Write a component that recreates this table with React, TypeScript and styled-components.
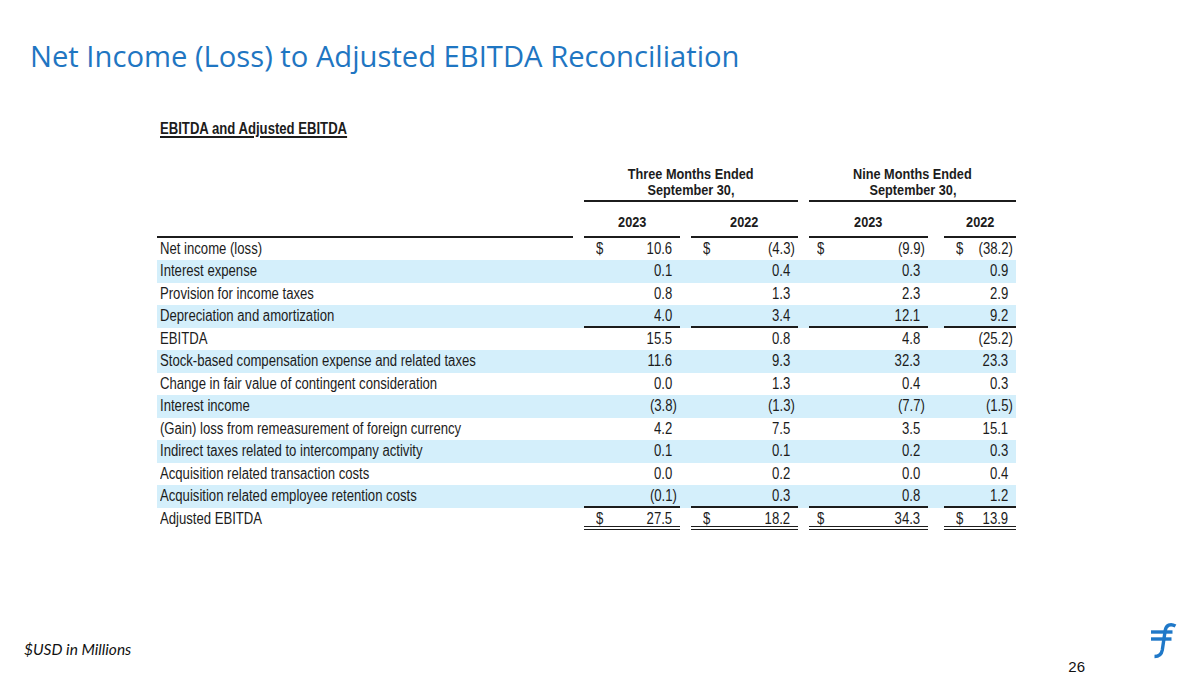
import React from 'react';
import styled, { createGlobalStyle, css } from 'styled-components';

const GlobalStyle = createGlobalStyle`
    html, body {
        margin: 0;
        padding: 0;
        background: #ffffff;
    }
`;

// Arial Narrow is Arial squeezed horizontally; no narrow face is installed, so the table text
// uses Liberation Sans (Arial metrics) and a horizontal squeeze on each text run
const TABLE_FONT = `'Liberation Sans', Arial, sans-serif`;
const SQUEEZE = 0.82;
const BLUE = '#1f76c2';
const BAND = '#d4effb';
const INK = '#1c1c1c';

// label | gap | 3M 2023 | gap | 3M 2022 | gap | 9M 2023 | gap | 9M 2022
const COLUMNS = '416px 11px 96px 11px 107px 11px 119px 16px 72px';

const Slide = styled.div`
    width: 1200px;
    height: 675px;
    display: flex;
    flex-direction: column;
    background: #ffffff;
    overflow: hidden;
`;

const Title = styled.h1`
    margin: 38px 0 0 30px;
    font-family: 'Open Sans', 'Lato', sans-serif;
    font-weight: 400;
    font-size: 29.2px;
    line-height: 36px;
    color: ${BLUE};
    white-space: nowrap;
    font-variant-ligatures: none;
`;

const TableArea = styled.div`
    margin: 44.5px 0 0 157px;
    width: 859px;
    font-family: ${TABLE_FONT};
    color: ${INK};
`;

const Squeeze = styled.span<{ origin?: 'left' | 'right' | 'center' }>`
    display: inline-block;
    white-space: nowrap;
    transform: scaleX(${SQUEEZE});
    transform-origin: ${p => p.origin ?? 'left'};
`;

const TableTitle = styled.div`
    padding-left: 3px;
    font-weight: 700;
    font-size: 16px;
    line-height: 20px;
`;

const Underlined = styled(Squeeze)`
    text-decoration: underline;
    text-decoration-thickness: 1.5px;
    text-underline-offset: 2px;
`;

const Grid = styled.div<{ top?: number }>`
    display: grid;
    grid-template-columns: ${COLUMNS};
    margin-top: ${p => p.top ?? 0}px;
`;

const PeriodHead = styled.div<{ col: string }>`
    grid-column: ${p => p.col};
    padding-bottom: 1.5px;
    border-bottom: 2px solid ${INK};
    font-weight: 700;
    font-size: 15.5px;
    line-height: 16.5px;
    text-align: center;
`;

const YearHead = styled.div<{ col: number }>`
    grid-column: ${p => p.col};
    padding-bottom: 5.5px;
    border-bottom: 2px solid ${INK};
    font-weight: 700;
    font-size: 15.5px;
    line-height: 16px;
    text-align: center;
`;

const RuleCell = styled.div`
    grid-column: 1;
    border-bottom: 2px solid ${INK};
`;

const Row = styled.div<{ band?: boolean }>`
    display: grid;
    grid-template-columns: ${COLUMNS};
    height: 22.5px;
    background: ${p => (p.band ? BAND : 'transparent')};
    font-size: 16px;
    line-height: 22.5px;
`;

const Label = styled.div`
    grid-column: 1;
    padding-left: 3px;
`;

const NumCell = styled.div<{ col: number; rule?: 'single' | 'double'; dollarPad: number }>`
    grid-column: ${p => p.col};
    box-sizing: border-box;
    height: 22.5px;
    display: flex;
    justify-content: space-between;
    padding: 0 8px 0 ${p => p.dollarPad}px;
    ${p =>
        p.rule === 'single' &&
        css`
            border-bottom: 2px solid ${INK};
        `}
    ${p =>
        p.rule === 'double' &&
        css`
            border-bottom: 4px double ${INK};
        `}
`;

const Amount = styled(Squeeze)<{ neg: boolean }>`
    /* closing parenthesis hangs past the column of figures */
    margin-right: ${p => (p.neg ? -5 : 0)}px;
`;

const Footer = styled.div`
    margin-top: auto;
    display: flex;
    justify-content: space-between;
    height: 60px;
`;

const Note = styled.div`
    margin: 24px 0 0 24px;
    font-family: 'Lato', 'Open Sans', sans-serif;
    font-style: italic;
    font-size: 15.5px;
    line-height: 20px;
    color: #111;
    height: 20px;
`;

const Corner = styled.div`
    display: flex;
    align-items: flex-end;
`;

const PageNo = styled.div`
    margin: 0 63px 0 0;
    font-family: 'Liberation Sans', Arial, sans-serif;
    font-size: 15px;
    line-height: 16px;
    color: #111;
`;

const Logo = styled.svg`
    align-self: flex-start;
    margin: 6px 22px 0 0;
`;

type Rule = 'single' | 'double' | undefined;

interface Line {
    label: string;
    values: string[];
    dollar?: boolean;
    rule?: Rule;
}

const lines: Line[] = [
    { label: 'Net income (loss)', values: ['10.6', '(4.3)', '(9.9)', '(38.2)'], dollar: true },
    { label: 'Interest expense', values: ['0.1', '0.4', '0.3', '0.9'] },
    { label: 'Provision for income taxes', values: ['0.8', '1.3', '2.3', '2.9'] },
    { label: 'Depreciation and amortization', values: ['4.0', '3.4', '12.1', '9.2'], rule: 'single' },
    { label: 'EBITDA', values: ['15.5', '0.8', '4.8', '(25.2)'] },
    { label: 'Stock-based compensation expense and related taxes', values: ['11.6', '9.3', '32.3', '23.3'] },
    { label: 'Change in fair value of contingent consideration', values: ['0.0', '1.3', '0.4', '0.3'] },
    { label: 'Interest income', values: ['(3.8)', '(1.3)', '(7.7)', '(1.5)'] },
    { label: '(Gain) loss from remeasurement of foreign currency', values: ['4.2', '7.5', '3.5', '15.1'] },
    { label: 'Indirect taxes related to intercompany activity', values: ['0.1', '0.1', '0.2', '0.3'] },
    { label: 'Acquisition related transaction costs', values: ['0.0', '0.2', '0.0', '0.4'] },
    { label: 'Acquisition related employee retention costs', values: ['(0.1)', '0.3', '0.8', '1.2'], rule: 'single' },
    { label: 'Adjusted EBITDA', values: ['27.5', '18.2', '34.3', '13.9'], dollar: true, rule: 'double' },
];

const valueCols = [3, 5, 7, 9];
const dollarPads = [12, 12, 8, 12];

const FlywireMark = () => (
    <Logo width="30" height="38" viewBox="0 0 30 38">
        <g fill="none" stroke="#1f78c8" strokeWidth="3.4" strokeLinecap="butt">
            <path d="M27.5 5 C22.5 2.2, 18 4, 17.2 9.5 L14.3 29 C13.6 33, 10.8 35.5, 6.5 35.5" />
            <path d="M3 11 H24.5" />
            <path d="M3 18 H23.5" />
        </g>
    </Logo>
);

const App = () => {
    return (
        <>
            <GlobalStyle />
            <Slide>
                <Title>Net Income (Loss) to Adjusted EBITDA Reconciliation</Title>
                <TableArea>
                    <TableTitle>
                        <Underlined>EBITDA and Adjusted EBITDA</Underlined>
                    </TableTitle>
                    <Grid top={27}>
                        <PeriodHead col="3 / 6">
                            <Squeeze origin="center">Three Months Ended</Squeeze>
                            <br />
                            <Squeeze origin="center">September 30,</Squeeze>
                        </PeriodHead>
                        <PeriodHead col="7 / 10">
                            <Squeeze origin="center">Nine Months Ended</Squeeze>
                            <br />
                            <Squeeze origin="center">September 30,</Squeeze>
                        </PeriodHead>
                    </Grid>
                    <Grid top={12}>
                        <RuleCell />
                        <YearHead col={3}>
                            <Squeeze origin="center">2023</Squeeze>
                        </YearHead>
                        <YearHead col={5}>
                            <Squeeze origin="center">2022</Squeeze>
                        </YearHead>
                        <YearHead col={7}>
                            <Squeeze origin="center">2023</Squeeze>
                        </YearHead>
                        <YearHead col={9}>
                            <Squeeze origin="center">2022</Squeeze>
                        </YearHead>
                    </Grid>
                    {lines.map((line, i) => (
                        <Row key={line.label} band={i % 2 === 1}>
                            <Label>
                                <Squeeze>{line.label}</Squeeze>
                            </Label>
                            {line.values.map((v, j) => (
                                <NumCell key={j} col={valueCols[j]} rule={line.rule} dollarPad={dollarPads[j]}>
                                    <Squeeze>{line.dollar ? '$' : ''}</Squeeze>
                                    <Amount origin="right" neg={v.startsWith('(')}>
                                        {v}
                                    </Amount>
                                </NumCell>
                            ))}
                        </Row>
                    ))}
                </TableArea>
                <Footer>
                    <Note>$USD in Millions</Note>
                    <Corner>
                        <PageNo>26</PageNo>
                        <FlywireMark />
                    </Corner>
                </Footer>
            </Slide>
        </>
    );
};

export default App;
